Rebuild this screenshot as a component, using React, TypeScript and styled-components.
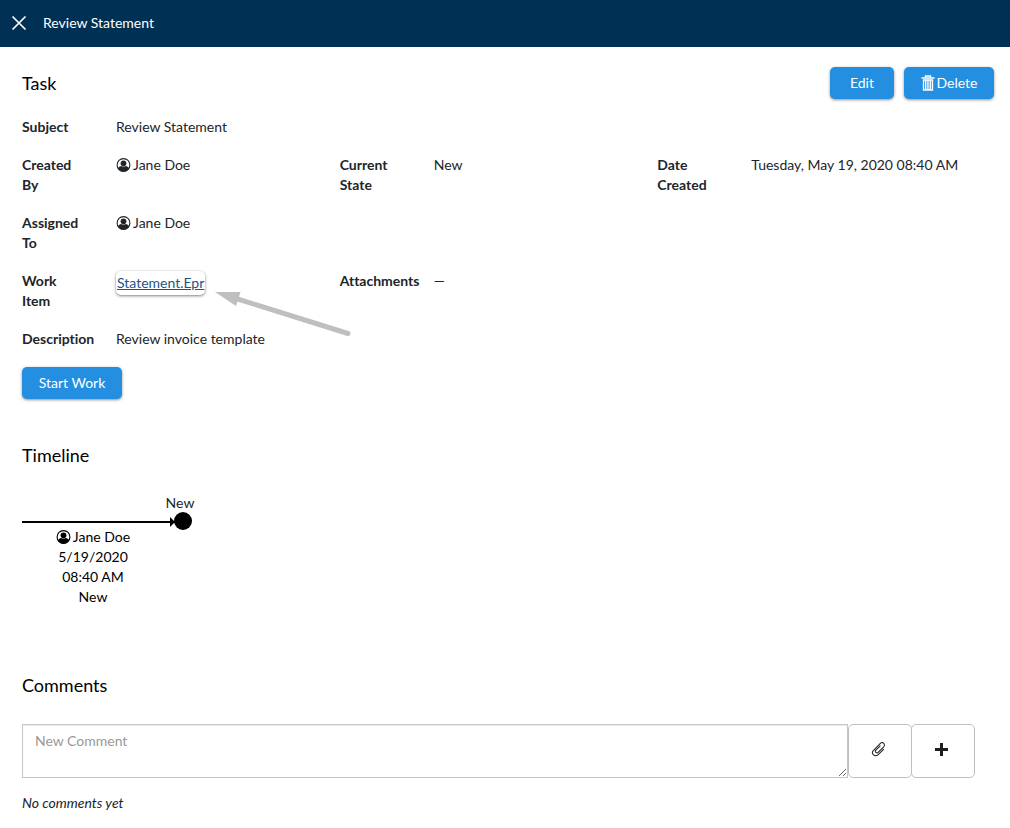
import React from "react";
import styled, { createGlobalStyle } from "styled-components";

const GlobalStyle = createGlobalStyle`
  *, *::before, *::after { box-sizing: border-box; }
  body {
    margin: 0;
    background: #fff;
    color: #212529;
    font-family: Lato, sans-serif;
    font-size: 14px;
    font-variant-ligatures: none;
    line-height: 20px;
  }
  button, textarea { font: inherit; }
`;

const TopBar = styled.header`
  display: flex;
  align-items: center;
  gap: 16px;
  height: 47px;
  padding: 0 11px 2px;
  background: #003053;
  color: #fff;
`;

const BarTitle = styled.h1`
  margin: 0;
  font-size: 14px;
  font-weight: 400;
`;

const CloseButton = styled.button`
  display: flex;
  padding: 0;
  border: 0;
  background: none;
  color: inherit;
  cursor: pointer;
`;

const Page = styled.main`
  padding: 20px 16px 15px 22px;
`;

const TitleRow = styled.div`
  display: flex;
  align-items: center;
  justify-content: space-between;
  min-height: 32px;
`;

const Heading = styled.h2`
  margin: 0;
  color: #000;
  font-size: 18px;
  font-weight: 400;
  line-height: 24px;
`;

const Actions = styled.div`
  display: flex;
  gap: 10px;
`;

const PrimaryButton = styled.button<{ $minWidth: number }>`
  display: inline-flex;
  align-items: center;
  justify-content: center;
  gap: 2px;
  min-width: ${(p) => p.$minWidth}px;
  height: 32px;
  padding: 0 15px;
  border: 0;
  border-radius: 5px;
  background: #248fe0;
  box-shadow: 0 1px 3px rgba(0, 0, 0, 0.45);
  color: #fff;
  cursor: pointer;
`;

const Section = styled.section<{ $top: number }>`
  margin-top: ${(p) => p.$top}px;
  padding-right: 19px;
`;

const Fields = styled.dl`
  display: flex;
  flex-direction: column;
  gap: 18px;
  margin: 0 0 18px;
`;

const FieldRow = styled.div`
  display: grid;
  grid-template-columns: repeat(3, 1fr);
`;

const FieldCell = styled.div`
  display: grid;
  grid-template-columns: 64px 1fr;
  column-gap: 30px;
`;

const Label = styled.dt`
  font-weight: 700;
`;

const Value = styled.dd`
  position: relative;
  margin: 0;
  white-space: nowrap;
`;

const ItemLink = styled.a`
  display: inline-block;
  padding: 2px 1px;
  border-radius: 5px;
  box-shadow: 0 1px 3px rgba(0, 0, 0, 0.5);
  color: #1b5684;
  text-decoration: underline;
`;

const Pointer = styled.svg`
  position: absolute;
  top: 16px;
  left: 98px;
`;

const Person = styled.span`
  display: inline-flex;
  align-items: center;
  gap: 2px;
  vertical-align: top;
`;

const Track = styled.div`
  display: flex;
  margin-top: 26px;
  color: #000;
`;

const Step = styled.div`
  width: 142px;
  padding-top: 28px;
`;

const StepDetails = styled.div`
  margin-top: 4px;
  text-align: center;
`;

const StepLine = styled.div`
  position: relative;
  width: 153px;
  height: 2px;
  background: #000;

  &::after {
    content: "";
    position: absolute;
    top: -4px;
    right: 0;
    border: 5px solid transparent;
    border-right: 0;
    border-left-color: #000;
  }
`;

const Milestone = styled.div`
  display: flex;
  flex-direction: column;
  align-items: center;
  width: 32px;
  color: #212529;
`;

const Dot = styled.span`
  width: 18px;
  height: 18px;
  margin: -1px 0 0 6px;
  border-radius: 50%;
  background: #000;
`;

const CommentForm = styled.form`
  display: flex;
  margin: 27px 0 15px;
`;

const CommentBox = styled.textarea`
  display: block;
  flex: 1;
  min-width: 0;
  height: 54px;
  padding: 6px 12px;
  border: 1px solid #c6c6c6;
  border-radius: 0;
  box-shadow: inset 0 1px 1px rgba(0, 0, 0, 0.08);
  color: #212529;
  resize: vertical;

  &::placeholder { color: #999; opacity: 1; }
`;

const SquareButton = styled.button`
  display: flex;
  align-items: center;
  justify-content: center;
  width: 64px;
  height: 54px;
  padding: 0 3px 4px 0;
  border: 1px solid #c0c0c0;
  border-radius: 5px;
  background: #fff;
  color: #1d1d22;
  cursor: pointer;

  & + & { margin-left: -1px; }
`;

const EmptyNote = styled.p`
  margin: 0;
  font-style: italic;
`;

const UserIcon = () => (
  <svg width="15" height="14" viewBox="0 0 15 14" aria-hidden="true">
    <circle cx="7.5" cy="7" r="6.4" fill="#fff" stroke="currentColor" strokeWidth="1.1" />
    <circle cx="7.5" cy="5.3" r="2.9" fill="currentColor" />
    <path d="M1.9 10.4C2.6 9 3.9 8.2 5.2 7.9c1.3.9 3.3.9 4.6 0 1.3.3 2.6 1.1 3.3 2.5A6.3 6.3 0 0 1 7.5 13.5a6.3 6.3 0 0 1-5.6-3.1Z" fill="currentColor" />
  </svg>
);

const TrashIcon = () => (
  <svg width="14" height="16" viewBox="0 0 14 16" fill="none" stroke="currentColor" aria-hidden="true">
    <path d="M0.5 3H13.5M4.5 3V1H9.5V3" strokeWidth="1.4" />
    <path d="M2.5 5V15H11.5V5Z" strokeWidth="1.3" />
    <path d="M4.5 5V15M6.2 5V15M7.9 5V15M9.6 5V15" strokeWidth="1.1" />
  </svg>
);

const CloseIcon = () => (
  <svg width="16" height="16" viewBox="0 0 16 16" stroke="currentColor" strokeWidth="1.7" aria-hidden="true">
    <path d="M1.5 1.5L14.5 14.5M14.5 1.5L1.5 14.5" />
  </svg>
);

const ClipIcon = () => (
  <svg width="16" height="16" viewBox="0 0 16 16" fill="none" stroke="currentColor" strokeLinecap="round" aria-hidden="true">
    <path
      d="M11 6.6H5a1.6 1.6 0 0 0 0 3.2H12.9a2.4 2.4 0 0 0 0-4.8H3.2a3.2 3.2 0 0 0 0 6.4H11"
      transform="rotate(-45 8 8)"
    />
  </svg>
);

const PlusIcon = () => (
  <svg width="13" height="13" viewBox="0 0 13 13" fill="currentColor" aria-hidden="true">
    <path d="M5 0H8V5H13V8H8V13H5V8H0V5H5Z" />
  </svg>
);

const User = () => (
  <Person>
    <UserIcon />
    Jane Doe
  </Person>
);

const Field = ({ label, children }: { label: string; children: React.ReactNode }) => (
  <FieldCell>
    <Label>{label}</Label>
    <Value>{children}</Value>
  </FieldCell>
);

export default function App() {
  return (
    <>
      <GlobalStyle />
      <TopBar>
        <CloseButton type="button" aria-label="Close">
          <CloseIcon />
        </CloseButton>
        <BarTitle>Review Statement</BarTitle>
      </TopBar>
      <Page>
        <TitleRow>
          <Heading>Task</Heading>
          <Actions>
            <PrimaryButton type="button" $minWidth={64}>Edit</PrimaryButton>
            <PrimaryButton type="button" $minWidth={90}>
              <TrashIcon />
              Delete
            </PrimaryButton>
          </Actions>
        </TitleRow>
        <Section $top={18}>
          <Fields>
            <FieldRow>
              <Field label="Subject">Review Statement</Field>
            </FieldRow>
            <FieldRow>
              <Field label="Created By"><User /></Field>
              <Field label="Current State">New</Field>
              <Field label="Date Created">Tuesday, May 19, 2020 08:40 AM</Field>
            </FieldRow>
            <FieldRow>
              <Field label="Assigned To"><User /></Field>
            </FieldRow>
            <FieldRow>
              <Field label="Work Item">
                <ItemLink href="#">Statement.Epr</ItemLink>
                <Pointer width="140" height="52" viewBox="0 0 140 52" aria-hidden="true">
                  <path d="M22 11.5L134 46.5" stroke="#bfbfbf" strokeWidth="5" strokeLinecap="round" />
                  <path d="M1 5L26.5 5L22 19Z" fill="#bfbfbf" />
                </Pointer>
              </Field>
              <Field label="Attachments">—</Field>
            </FieldRow>
            <FieldRow>
              <Field label="Description">Review invoice template</Field>
            </FieldRow>
          </Fields>
          <PrimaryButton type="button" $minWidth={100}>Start Work</PrimaryButton>
        </Section>
        <Section $top={44}>
          <Heading>Timeline</Heading>
          <Track>
            <Step>
              <StepLine />
              <StepDetails>
                <div><User /></div>
                <div>5/19/2020</div>
                <div>08:40 AM</div>
                <div>New</div>
              </StepDetails>
            </Step>
            <Milestone>
              New
              <Dot />
            </Milestone>
          </Track>
        </Section>
        <Section $top={66}>
          <Heading>Comments</Heading>
          <CommentForm>
            <CommentBox placeholder="New Comment" aria-label="New Comment" />
            <SquareButton type="button" aria-label="Attach file"><ClipIcon /></SquareButton>
            <SquareButton type="button" aria-label="Add comment"><PlusIcon /></SquareButton>
          </CommentForm>
          <EmptyNote>No comments yet</EmptyNote>
        </Section>
      </Page>
    </>
  );
}
